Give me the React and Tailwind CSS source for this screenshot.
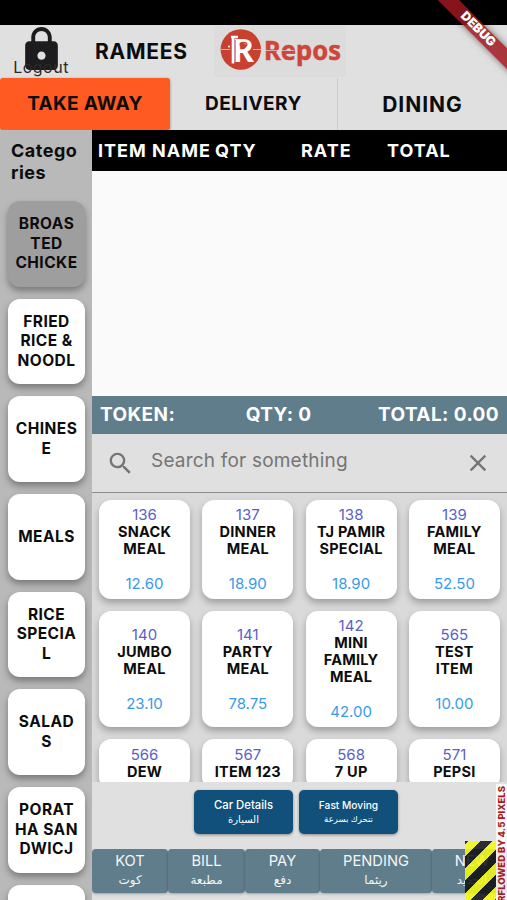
import { MdClose, MdLock, MdSearch } from "react-icons/md";

const categories = [
  { lines: ["BROAS", "TED", "CHICKE"], active: true },
  { lines: ["FRIED", "RICE &", "NOODL"] },
  { lines: ["CHINES", "E"] },
  { lines: ["MEALS"] },
  { lines: ["RICE", "SPECIA", "L"] },
  { lines: ["SALAD", "S"] },
  { lines: ["PORAT", "HA SAN", "DWICJ"] },
  { lines: [] },
];

const items = [
  { code: 136, lines: ["SNACK", "MEAL"], price: "12.60" },
  { code: 137, lines: ["DINNER", "MEAL"], price: "18.90" },
  { code: 138, lines: ["TJ PAMIR", "SPECIAL"], price: "18.90" },
  { code: 139, lines: ["FAMILY", "MEAL"], price: "52.50" },
  { code: 140, lines: ["JUMBO", "MEAL"], price: "23.10" },
  { code: 141, lines: ["PARTY", "MEAL"], price: "78.75" },
  { code: 142, lines: ["MINI", "FAMILY", "MEAL"], price: "42.00" },
  { code: 565, lines: ["TEST", "ITEM"], price: "10.00" },
  { code: 566, lines: ["DEW"] },
  { code: 567, lines: ["ITEM 123"] },
  { code: 568, lines: ["7 UP"] },
  { code: 571, lines: ["PEPSI"] },
];

const actions = [
  { label: "KOT", arabic: "كوت", width: "w-[76px]" },
  { label: "BILL", arabic: "مطبعة", width: "w-[77px]" },
  { label: "PAY", arabic: "دفع", width: "w-[75px]" },
  { label: "PENDING", arabic: "ريثما", width: "w-[112px]" },
  { label: "NEW", arabic: "الجديد", width: "w-[80px]" },
];

const Logo = () => (
  <svg width="132" height="52" viewBox="0 0 132 52">
    <rect width="132" height="52" fill="#dcdcdc" />
    <circle cx="26.8" cy="24.5" r="20.2" fill="#c8402f" />
    <path d="M7 24.5h9M39 24.5h8" stroke="#e8b5ae" strokeWidth="1" />
    <text
      x="18"
      y="37"
      fontSize="33"
      fontWeight="700"
      fill="#fff"
      textLength="22"
      lengthAdjust="spacingAndGlyphs"
      className="font-['Noto_Sans']"
    >
      R
    </text>
    <path d="M17 12h7M19 11v27.500" stroke="#fff" strokeWidth="2.6" />
    <path d="M21.300 15v24" stroke="#c8402f" strokeWidth="0.7" />
    <ellipse cx="29.500" cy="19.500" rx="3.400" ry="2.200" fill="none" stroke="#c8402f" strokeWidth="1.2" />
    <circle cx="15" cy="21.500" r="1" fill="#fff" />
    <text
      x="50"
      y="34.5"
      fontSize="27.5"
      fontWeight="700"
      fill="#cd4638"
      stroke="#cd4638"
      strokeWidth="0.5"
      textLength="77"
      lengthAdjust="spacingAndGlyphs"
      className="font-['Noto_Sans']"
    >
      Repos
    </text>
    <path d="M48 25.500h32" stroke="#dcdcdc" strokeWidth="0.7" />
  </svg>
);

const Header = () => (
  <header className="flex h-[53px] shrink-0 items-start bg-[#e0e0e0]">
    <button className="flex w-[82px] flex-col items-center text-[#1c1c1e]">
      <MdLock size={49} />
      <span className="-mt-[17px] text-base leading-5 tracking-[0.5px] text-[#2a2a2a]">
        Logout
      </span>
    </button>
    <h1 className="ml-[13px] w-[119px] pt-[13px] text-[21px] leading-7 font-bold tracking-[0.75px]">
      RAMEES
    </h1>
    <Logo />
  </header>
);

const OrderTabs = () => (
  <nav className="flex h-[52px] shrink-0 bg-[#e0e0e0] font-bold">
    <button className="w-[170px] rounded-[3px] bg-[#ff5a22] text-[19px] tracking-[0.3px] shadow-[0_1px_3px_rgba(0,0,0,0.4)]">
      TAKE AWAY
    </button>
    <button className="w-[168px] border-r border-[#cacaca] text-[19px] tracking-[0.5px]">
      DELIVERY
    </button>
    <button className="flex-1 pt-px text-[21px] tracking-[1px]">DINING</button>
  </nav>
);

const Sidebar = () => (
  <aside className="w-[92px] shrink-0 overflow-hidden bg-[#b9b9b9] px-2">
    <h2 className="h-[71px] pt-[10px] pl-[3px] text-[18px] leading-[22px] font-bold tracking-[0.5px]">
      Catego
      <br />
      ries
    </h2>
    <div className="flex flex-col gap-3">
      {categories.map((cat, i) => (
        <button
          key={i}
          className={`flex h-[85.7px] w-[77px] shrink-0 flex-col items-center justify-center rounded-xl pb-px text-[15.5px] leading-[19.5px] font-bold tracking-[0.45px] shadow-[0_4px_7px_rgba(0,0,0,0.35)] ${
            cat.active ? "bg-[#9e9e9e]" : "bg-white"
          }`}
        >
          {cat.lines.map((line) => (
            <span key={line} className="whitespace-nowrap">
              {line}
            </span>
          ))}
        </button>
      ))}
    </div>
  </aside>
);

const ItemCard = ({ item }) => (
  <button
    className={`flex flex-col items-center rounded-xl bg-white text-[15px] leading-[17px] shadow-[0_4px_7px_rgba(0,0,0,0.28)] ${
      item.price ? "justify-center pb-px" : "justify-start pt-[7px]"
    }`}
  >
    <span className="text-[#5a5fc8]">{item.code}</span>
    {item.lines.map((line) => (
      <span key={line} className="text-[14.5px] font-bold tracking-[0.25px] whitespace-nowrap">
        {line}
      </span>
    ))}
    {item.price && <span className="mt-[18px] text-[#379bea]">{item.price}</span>}
  </button>
);

const Cart = () => (
  <section className="flex flex-col">
    <div className="flex h-[41px] items-center bg-black pl-[6px] text-[18px] font-bold tracking-[1px] text-white">
      <span className="w-[117px] whitespace-nowrap">ITEM NAME</span>
      <span className="w-[86px]">QTY</span>
      <span className="w-[86px]">RATE</span>
      <span>TOTAL</span>
    </div>
    <div className="h-[225px] bg-[#fafafa]" />
    <div className="flex h-[38px] items-center justify-between bg-[#5f7d8b] px-2 pt-px text-[19px] font-bold tracking-[0.4px] text-white">
      <span>TOKEN:</span>
      <span className="pl-1">QTY: 0</span>
      <span>TOTAL: 0.00</span>
    </div>
  </section>
);

const SearchBar = () => (
  <div className="flex h-[59px] shrink-0 items-center border-b border-[#8e8e8e] bg-[#e0e0e0] pr-[15px] pl-[14px] text-[#757575]">
    <MdSearch size={29} />
    <span className="ml-4 flex-1 pb-[3px] text-[19px] tracking-[0.2px]">
      Search for something
    </span>
    <MdClose size={28} />
  </div>
);

const Shortcuts = () => (
  <div className="flex h-[67px] shrink-0 justify-center gap-[6px] pt-2 pr-[7px] font-medium text-white">
    <button className="flex h-[44px] w-[99px] flex-col items-center justify-center rounded-[5px] bg-[#12507c] text-[11.3px] leading-[14px] shadow-[0_1px_3px_rgba(0,0,0,0.4)]">
      <span>Car Details</span>
      <span dir="rtl" className="text-[10px] font-normal">
        السيارة
      </span>
    </button>
    <button className="flex h-[44px] w-[99px] flex-col items-center justify-center rounded-[5px] bg-[#12507c] text-[10.2px] leading-[14px] shadow-[0_1px_3px_rgba(0,0,0,0.4)]">
      <span>Fast Moving</span>
      <span dir="rtl" className="text-[8.5px] font-normal">
        تتحرك بسرعة
      </span>
    </button>
  </div>
);

const ActionBar = () => (
  <div className="flex h-[51px] shrink-0 overflow-hidden">
    {actions.map((action) => (
      <button
        key={action.label}
        className={`flex h-[44px] shrink-0 flex-col items-center rounded-[4px] bg-[#607d8b] pt-[2px] text-[14.7px] leading-5 text-[#f3f6f7] shadow-[0_1px_3px_rgba(0,0,0,0.3)] ${action.width}`}
      >
        <span>{action.label}</span>
        <span dir="rtl" className="text-[12px] leading-[18px]">
          {action.arabic}
        </span>
      </button>
    ))}
  </div>
);

// Debug ribbon in the top right corner
const DebugBanner = () => (
  <div className="absolute top-[22px] left-[408px] flex h-[14.6px] w-[140px] rotate-45 items-center justify-center bg-[rgba(158,24,30,0.85)] text-[12.5px] font-black text-white shadow-[0_0_7px_rgba(0,0,0,0.5)]">
    DEBUG
  </div>
);

// Hazard stripes and label over the overflowing edge of the action bar
const OverflowMarker = () => (
  <>
    <div className="absolute top-[841px] left-[465px] h-[59px] w-[31px] bg-[repeating-linear-gradient(135deg,rgba(15,15,20,0.86)_0_2.2px,rgba(245,248,20,0.88)_2.2px_10.9px,rgba(15,15,20,0.86)_10.9px_17.3px)]" />
    <div className="absolute top-[784px] left-[496px] flex h-[116px] w-[11px] items-center overflow-hidden bg-white/85 text-[9.5px] leading-[11px] font-extrabold whitespace-nowrap text-[#a81c22] [writing-mode:vertical-rl]">
      <span className="rotate-180 pb-[2px]">RFLOWED BY 4.5 PIXELS</span>
    </div>
  </>
);

const App = () => {
  return (
    <div className="relative flex h-[900px] w-[507px] flex-col overflow-hidden bg-[#e0e0e0] font-['Inter','Noto_Sans','DejaVu_Sans',sans-serif] text-[#0c0c0c]">
      <div className="h-[25px] shrink-0 bg-black" />
      <Header />
      <OrderTabs />
      <div className="flex min-h-0 flex-1">
        <Sidebar />
        <main className="flex min-w-0 flex-1 flex-col">
          <Cart />
          <SearchBar />
          <div className="min-h-0 flex-1 overflow-hidden bg-[#dadada] px-[7px] pt-[7px]">
            <div className="grid grid-cols-[repeat(4,91px)] grid-rows-[99px_116px_50px] gap-x-[12.3px] gap-y-3">
              {items.map((item) => (
                <ItemCard key={item.code} item={item} />
              ))}
            </div>
          </div>
          <Shortcuts />
          <ActionBar />
        </main>
      </div>
      <DebugBanner />
      <OverflowMarker />
    </div>
  );
};

export default App;
